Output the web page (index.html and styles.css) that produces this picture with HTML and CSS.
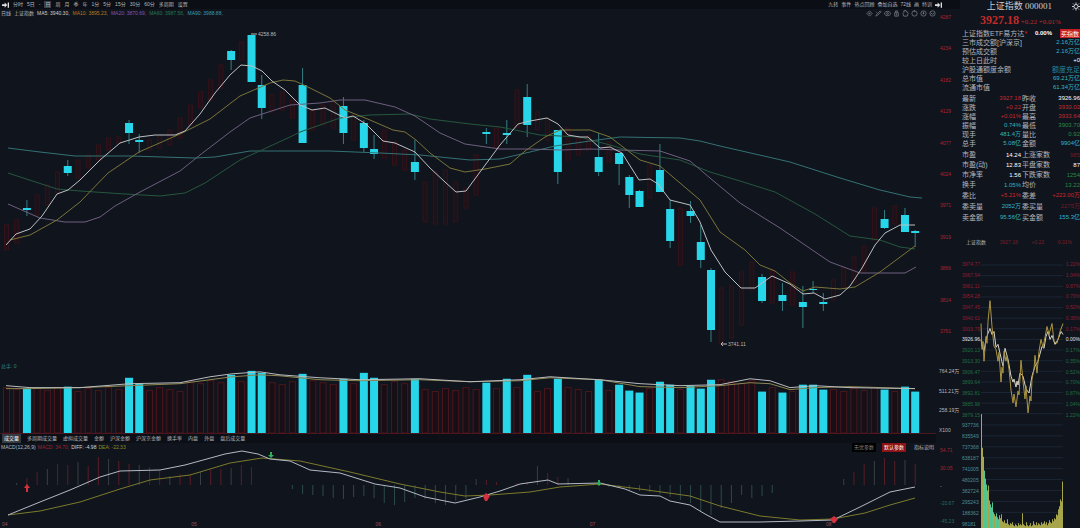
FILE: index.html
```html
<!DOCTYPE html>
<html lang="zh-CN">
<head>
    <meta charset="UTF-8">
    <meta name="viewport" content="width=device-width, initial-scale=1.0">
    <title>上证指数 000001</title>
    <link rel="stylesheet" href="styles.css">
</head>
<body>
    <div class="app">
        <main class="main">
            <nav class="toolbar">
                <svg class="arrow-icon" viewBox="0 0 8 6"><path d="M0 2h3V0l3 3-3 3V4H0zM6.500 0H8v6H6.500z"/></svg>
                <button>分时</button>
                <button>5日</button>
                <span>-</span>
                <button class="active">日</button>
                <button>周</button>
                <button>月</button>
                <button>季</button>
                <button>年</button>
                <button>1分</button>
                <button>5分</button>
                <button>15分</button>
                <button>30分</button>
                <button>60分</button>
                <button>多周期</button>
                <button>设置</button>
                <div class="tools">
                    <button>九转</button>
                    <button>事件</button>
                    <button>热点回顾</button>
                    <button>叠加自选</button>
                    <button>72线</button>
                    <button>画</button>
                    <button>特训</button>
                    <svg class="arrow-icon" viewBox="0 0 8 6"><path d="M0 2h3V0l3 3-3 3V4H0zM6.500 0H8v6H6.500z"/></svg>
                </div>
            </nav>

            <div class="info">
                <span>日线</span>
                <span>上证指数</span>
                <span class="ma5">MA5: 3940.30,</span>
                <span class="ma10">MA10: 3895.23,</span>
                <span class="ma20">MA20: 3870.69,</span>
                <span class="ma60">MA60: 3987.56,</span>
                <span class="ma90">MA90: 3988.88,</span>
                <div class="icons">
                    <svg viewBox="0 0 8 8"><path d="M4 1l3 3-3 3-3-3zM4 3v2M3 4h2"/></svg>
                    <svg viewBox="0 0 8 8"><path d="M1 7l1-2 4-4 1 1-4 4zM1 2l1 1"/></svg>
                    <svg viewBox="0 0 8 8"><path d="M0 4q4-5 8 0q-4 5-8 0z"/><circle cx="4" cy="4" r="1"/></svg>
                    <svg viewBox="0 0 8 8"><path d="M2 3h4v4H2zM3 3V1h2v2M4 4v2"/></svg>
                    <svg viewBox="0 0 8 8"><path d="M2 7L1 4l1-1V1h1V0h1v1h1v1h1l1 2-1 3z"/></svg>
                    <svg viewBox="0 0 8 8"><circle cx="4" cy="4" r="3"/><path d="M4 0v2"/></svg>
                    <svg viewBox="0 0 8 8"><circle cx="4" cy="4" r="3"/><path d="M4 2v3M3 4h2"/></svg>
                    <svg viewBox="0 0 8 8"><circle cx="4" cy="4" r="3"/><path d="M2 3l2 2 2-2"/></svg>
                </div>
            </div>

            <svg class="chart k-chart" id="k-chart" viewBox="0 18 936 344" preserveAspectRatio="none">
                <g id="k-up"></g>
                <g id="k-down"></g>
                <polyline class="line ma90" points="8,148 40,152 75,156 130,156 195,158 215,157 250,151 330,151 380,153 420,155 470,160 500,159 530,152 555,146 590,141 620,137 680,138 700,141 720,146 790,162 840,178 880,190 910,197 922,198"/>
                <polyline class="line ma60" points="8,173 57,189 80,191 125,194 160,196 185,193 205,183 240,160 290,137 300,132 340,118 370,115 410,114 430,119 470,124 500,127 540,135 580,137 610,145 640,154 680,160 710,172 740,181 775,192 815,214 850,236 880,240 900,247 915,249"/>
                <polyline class="line ma20" points="8,204 40,218 65,222 85,222 100,217 115,206 140,192 180,171 200,155 230,132 250,118 290,105 320,103 340,100 365,100 395,107 415,116 440,133 465,144 500,149 530,149 560,150 590,149 620,150 660,151 690,161 710,178 740,203 780,228 830,262 860,273 905,273 916,267"/>
                <polyline class="line ma10" points="10,240 30,235 57,220 80,202 108,173 139,152 180,134 210,119 240,96 270,83 283,80 295,81 310,88 330,98 345,110 370,120 393,130 405,132 416,140 430,153 450,168 465,172 485,169 510,164 525,151 545,137 560,130 590,130 610,137 640,160 660,166 680,183 700,200 720,232 745,250 760,265 775,271 790,283 803,291 815,287 840,289 855,287 880,272 915,246"/>
                <polyline class="line ma5" points="6,245 16,234 30,229 42,216 57,194 68,190 80,180 100,160 120,143 139,137 155,135 175,135 185,131 200,114 215,93 230,75 241,65 252,66 262,71 272,81 285,90 300,105 312,110 325,108 345,118 353,116 366,124 383,141 395,143 415,152 430,168 445,182 456,192 466,191 480,172 500,145 518,124 530,121 547,118 558,124 568,135 580,137 588,137 600,148 610,147 622,153 639,180 650,179 658,184 670,200 690,205 700,222 711,250 725,272 741,288 755,288 772,276 790,284 803,294 814,293 825,299 840,295 850,286 862,268 875,245 885,233 900,225 915,225"/>
                <path class="pointer" d="M252 34h5M721 344h6M723 342l-2 2 2 2"/>
                <text class="mark" x="258" y="36">4258.86</text>
                <text class="mark" x="728" y="346">3741.11</text>
            </svg>
            <div class="axis k-axis">
                <span>4287</span><span>4234</span><span>4182</span><span>4129</span><span>4077</span><span>4024</span><span>3971</span><span>3919</span><span>3866</span><span>3814</span><span>3761</span>
            </div>

            <div class="vol-panel">
                <span class="vol-name">总手: 0</span>
                <svg class="chart" viewBox="0 362 936 72" preserveAspectRatio="none">
                    <g id="v-up"></g>
                    <g id="v-down"></g>
                    <polyline class="line v-slow" points="6,389 30,389 80,388 130,386 180,384 210,380 232,377 260,375 280,376 320,380 360,381 420,380 470,382 520,381 550,378 600,380 640,387 680,388 720,386 750,383 770,384 790,390 815,388 850,387 915,389"/>
                    <polyline class="line v-fast" points="6,386 30,388 80,388 130,384 180,383 210,377 232,374 260,372 280,375 320,378 360,380 420,379 470,382 520,380 550,377 600,380 640,384 680,386 720,385 750,379 770,381 790,388 815,386 850,388 915,389"/>
                </svg>
            </div>
            <div class="axis v-axis">
                <span>764.24万</span><span>511.21万</span><span>258.19万</span><span>X100</span>
            </div>

            <nav class="tabs">
                <button class="active">成交量</button>
                <button>多周期成交量</button>
                <button>虚拟成交量</button>
                <button>金额</button>
                <button>沪深金额</button>
                <button>沪深京金额</button>
                <button>换手率</button>
                <button>内盘</button>
                <button>外盘</button>
                <button>盘后成交量</button>
            </nav>

            <div class="macd-head">
                <span>MACD(12,26,9)</span>
                <span class="macd">MACD: 34.70,</span>
                <span class="diff">DIFF: -4.98</span>
                <span class="dea">DEA: -22.33</span>
                <div class="params">
                    <button class="none">无优参数</button>
                    <button class="default">默认参数</button>
                    <button>指标说明</button>
                </div>
            </div>

            <svg class="chart macd-chart" viewBox="0 452 936 68" preserveAspectRatio="none">
                <g id="m-bars"></g>
                <polyline class="line dea-line" points="8,515 40,511 80,502 120,489 150,480 190,475 230,463 262,458 300,461 350,472 400,484 440,492 465,496 490,495 530,492 560,487 600,484 640,489 690,496 720,506 760,516 800,520 833,519 865,513 890,505 915,498"/>
                <polyline class="line diff-line" points="8,515 40,502 70,490 100,477 120,471 160,470 185,465 225,454 242,451 258,454 270,459 290,461 310,470 340,473 375,484 400,488 425,497 455,503 480,497 500,491 520,484 548,480 558,484 600,483 625,489 640,495 660,496 670,501 690,505 705,514 720,522 760,522 800,521 833,520 860,507 890,492 915,487"/>
                <path class="buy" d="M27 484l3 4h-2v4h-2v-4h-2zM486 493l4 3-3 5h-2l-2-5zM834 516l4 3-3 4h-2l-3-4z"/>
                <path class="sell" d="M271 458l3-3h-2v-3h-2v3h-2zM599 486l3-3h-2v-3h-2v3h-2z"/>
            </svg>
            <div class="axis m-axis">
                <span>54.71</span><span>30.05</span><span class="zero">-</span><span class="neg">-20.67</span><span class="neg">-45.23</span>
            </div>

            <div class="dates">
                <span>04</span><span>05</span><span>06</span><span>07</span><span>08</span>
            </div>
        </main>

        <aside class="side">
            <header class="title">
                <h1>上证指数 000001</h1>
                <svg class="gear" viewBox="0 0 8 8"><circle cx="4" cy="4" r="2"/><path d="M4 0v2M4 6v2M0 4h2M6 4h2M1 1l1 1M6 6l1 1M7 1L6 2M1 7l1-1"/></svg>
            </header>
            <p class="price"><strong>3927.18</strong> <span>+0.22</span> <span>+0.01%</span></p>

            <div class="etf">
                <span>上证指数ETF易方达<i>*</i></span>
                <b>0.00%</b>
                <button>买指数</button>
            </div>
            <table class="stats">
                <tr><th>三市成交额[沪深京]</th><td>2.16万亿</td></tr>
                <tr><th>预估成交额</th><td>2.16万亿</td></tr>
                <tr><th>较上日此时</th><td class="flat">+0</td></tr>
                <tr><th>沪股通额度余额</th><td class="quota">额度充足</td></tr>
                <tr><th>总市值</th><td>69.21万亿</td></tr>
                <tr><th>流通市值</th><td>61.34万亿</td></tr>
            </table>

            <table class="quote">
                <tr><th>最新</th><td class="up">3927.18</td><th>昨收</th><td class="flat">3926.96</td></tr>
                <tr><th>涨跌</th><td class="up">+0.22</td><th>开盘</th><td class="up">3930.02</td></tr>
                <tr><th>涨幅</th><td class="up">+0.01%</td><th>最高</th><td class="up">3933.64</td></tr>
                <tr><th>振幅</th><td>0.74%</td><th>最低</th><td class="down">3903.70</td></tr>
                <tr><th>现手</th><td>481.4万</td><th>量比</th><td class="down">0.92</td></tr>
                <tr><th>总手</th><td>5.08亿</td><th>金额</th><td>9904亿</td></tr>
            </table>
            <table class="quote mid">
                <tr><th>市盈</th><td class="flat">14.24</td><th>上涨家数</th><td class="up dim">985</td></tr>
                <tr><th>市盈(动)</th><td class="flat">12.83</td><th>平盘家数</th><td class="flat">87</td></tr>
                <tr><th>市净率</th><td class="flat">1.56</td><th>下跌家数</th><td class="down">1254</td></tr>
                <tr><th>换手</th><td>1.05%</td><th>均价</th><td class="down">13.22</td></tr>
            </table>
            <table class="quote tall">
                <tr><th>委比</th><td class="up">+5.21%</td><th>委差</th><td class="up">+223.00万</td></tr>
                <tr><th>委卖量</th><td>2052万</td><th>委买量</th><td class="up dim">2275万</td></tr>
                <tr><th>卖金额</th><td>95.56亿</td><th>买金额</th><td>155.3亿</td></tr>
            </table>

            <div class="mini-head">
                <span>上证指数</span>
                <span class="r">3927.18</span>
                <span class="r">+0.22</span>
                <span class="r">0.01%</span>
            </div>
            <div class="mini mini-price">
                <div class="scale" id="price-scale"></div>
                <svg class="chart" viewBox="981 258 82 160" preserveAspectRatio="none">
                    <g class="grid-lines" id="price-grid"></g>
                    <polyline class="line avg" points="981,338 982,345 984,350 986,338 988,332 990,327 992,333 994,330 996,346 998,343 1000,352 1003,365 1005,347 1008,358 1011,375 1013,381 1014,378 1016,386 1017,380 1018,384 1020,372 1023,375 1026,388 1029,392 1032,375 1035,365 1038,360 1042,345 1044,347 1046,335 1048,330 1050,338 1052,334 1055,343 1058,338 1061,330 1063,333"/>
                    <polyline class="line now" points="981,322 982,348 983,340 984,360 986,335 987,342 988,320 990,299 992,325 994,345 996,348 998,360 999,351 1001,381 1002,366 1003,372 1004,350 1006,360 1007,355 1009,368 1011,389 1013,402 1014,393 1016,406 1018,390 1019,394 1021,359 1023,380 1025,398 1026,385 1028,412 1030,395 1031,400 1032,378 1034,368 1035,354 1037,372 1039,350 1041,338 1043,346 1045,336 1047,325 1049,333 1052,322 1054,340 1057,342 1060,330 1063,322"/>
                </svg>
                <div class="scale pct" id="pct-scale"></div>
            </div>
            <div class="mini mini-vol">
                <div class="scale" id="vol-scale"></div>
                <svg class="chart" viewBox="981 420 82 108" preserveAspectRatio="none">
                    <g class="grid-lines" id="vol-grid"></g>
                    <g id="mini-bars"></g>
                </svg>
            </div>
        </aside>
    </div>
    <script src="script.js"></script>
</body>
</html>
```
FILE: styles.css
```css
* {
    box-sizing: border-box;
}

body {
    margin: 0;
    background-color: #10141d;
    color: #b4b8be;
    font-family: "Liberation Sans", "Noto Sans CJK SC", sans-serif;
    font-size: 5px;
    line-height: 9px;
    overflow: hidden;
}

button {
    padding: 0;
    border: none;
    background: none;
    color: inherit;
    font: inherit;
    white-space: nowrap;
    cursor: pointer;
}

.app {
    display: grid;
    grid-template-columns: minmax(0, 1fr) 120px;
    grid-template-rows: minmax(0, 1fr);
    height: 100vh;
}

.main {
    display: grid;
    grid-template-columns: minmax(0, 1fr) 24px;
    grid-template-rows: 9px 9px minmax(0, 344fr) minmax(0, 72fr) 9px 9px minmax(0, 68fr) 8px;
    min-height: 0;
}

/* Barra superior */
.toolbar {
    grid-column: 1 / 3;
    display: flex;
    align-items: center;
    gap: 4px;
    padding: 0 18px 0 2px;
    background-color: #0b0e14;
}

.toolbar .active {
    padding: 0 1px;
    background-color: #3a3f47;
    line-height: 7px;
}

.arrow-icon {
    width: 7px;
    height: 6px;
    fill: #e0e0e0;
}

.tools {
    display: flex;
    align-items: center;
    gap: 3px;
    margin-left: auto;
}

.info {
    grid-column: 1;
    display: flex;
    gap: 3px;
    padding-left: 1px;
    white-space: nowrap;
}

.icons {
    display: flex;
    align-items: center;
    gap: 2px;
    margin-left: auto;
}

.icons svg {
    width: 7px;
    height: 7px;
    fill: none;
    stroke: #6f747b;
}

.ma5 { color: #d0d0d0; stroke: #bcc0c3; }
.ma10 { color: #b47c1e; stroke: #79743a; }
.ma20 { color: #8656b4; stroke: #6c5f7d; }
.ma60 { color: #277a50; stroke: #26573f; }
.ma90 { color: #3d9eb2; stroke: #337273; }

.chart {
    display: block;
    width: 100%;
    height: 100%;
    min-width: 0;
    min-height: 0;
    overflow: visible;
}

.line {
    fill: none;
    stroke-width: 1;
    vector-effect: non-scaling-stroke;
}

.k-chart {
    grid-column: 1;
    grid-row: 3;
}

.candle {
    fill: #28d6ea;
}

.wick {
    stroke: #357f84;
}

.rise {
    fill: #1c1219;
    stroke: #35121a;
}

.pointer {
    fill: none;
    stroke: #b5b5b5;
}

.mark {
    fill: #b5b9bd;
    font-size: 5px;
}

.axis {
    grid-column: 2;
    display: flex;
    flex-direction: column;
    justify-content: space-between;
    line-height: 8px;
    white-space: nowrap;
}

.k-axis {
    grid-row: 2 / 4;
    padding: 4px 0 27px 4px;
    color: #a82431;
}

.v-axis {
    grid-row: 4;
    padding: 5px 0 0 3px;
    color: #b4b8be;
}

.m-axis {
    grid-row: 6 / 9;
    padding: 3px 0 3px 4px;
    color: #a32531;
}

.m-axis .zero { color: #a9adb3; }
.m-axis .neg { color: #2a6e5c; }

/* Volume */
.vol-panel {
    grid-column: 1;
    grid-row: 4;
    position: relative;
    min-height: 0;
    border-bottom: 1px solid #4d1720;
}

.vol-name {
    position: absolute;
    top: 0;
    left: 1px;
    color: #2f8686;
}

.v-rise {
    fill: #170f15;
    stroke: #4e161c;
}

.v-fast { stroke: #b9bcbd; }
.v-slow { stroke: #8d8550; }

.tabs {
    grid-column: 1;
    grid-row: 5;
    display: flex;
    gap: 6px;
    padding-left: 2px;
    background-color: #0c1016;
}

.tabs .active {
    padding: 0 2px;
    background-color: #353a40;
    color: #ffffff;
}

.macd-head {
    grid-column: 1;
    grid-row: 6;
    display: flex;
    gap: 2px;
    padding-left: 1px;
    white-space: nowrap;
}

.macd-head .macd { color: #9c2431; }
.macd-head .diff { color: #d8d8d8; }
.macd-head .dea { color: #8f8d1f; }

.params {
    display: flex;
    gap: 6px;
    margin-left: auto;
}

.params button {
    padding: 0 2px;
}

.params .none {
    background-color: #000000;
    color: #7b7f85;
}

.params .default {
    background-color: #8c1216;
    color: #ffffff;
}

.macd-chart {
    grid-column: 1;
    grid-row: 7;
}

.m-red { stroke: #5a1d27; }
.m-dark { stroke: #3a3f45; }
.m-green { stroke: #2d4a49; }
.diff-line { stroke: #b3b9c4; }
.dea-line { stroke: #7c7a2c; }
.buy { fill: #d2313d; }
.sell { fill: #2fae5a; }

.dates {
    grid-column: 1;
    grid-row: 8;
    display: grid;
    grid-template-columns: 189fr 184fr 214fr 236fr 110fr;
    padding-left: 2px;
    color: #96505a;
    line-height: 8px;
}

/* Painel lateral */
.side {
    display: flex;
    flex-direction: column;
    min-height: 0;
    overflow: hidden;
    padding-left: 2px;
    font-size: 6px;
    white-space: nowrap;
}

.title {
    display: flex;
    justify-content: flex-end;
    gap: 20px;
    line-height: 13px;
}

.title h1 {
    margin: 0;
    color: #c9ccd0;
    font-family: "Liberation Serif", "Noto Sans CJK SC", serif;
    font-size: 9px;
    font-weight: normal;
}

.gear {
    width: 8px;
    height: 13px;
    fill: none;
    stroke: #c9ccd0;
}

.price {
    margin: 0;
    padding-left: 18px;
    color: #c32a28;
    font-family: "Liberation Serif", serif;
    font-size: 7px;
    line-height: 14px;
}

.price strong {
    font-size: 12px;
}

.etf {
    display: flex;
    justify-content: space-between;
    font-size: 7px;
}

.etf i { color: #e02020; }

.etf b {
    color: #ffffff;
    font-size: 6px;
}

.etf button {
    width: 20px;
    background-color: #c41d22;
    color: #ffffff;
    font-size: 6px;
    line-height: 8px;
}

table {
    width: 100%;
    border-collapse: collapse;
}

th, td {
    padding: 0;
}

th {
    font-size: 7px;
    font-weight: normal;
    text-align: left;
}

td {
    color: #32b4c4;
    text-align: right;
}

.stats .quota {
    color: #2285a6;
    font-size: 7px;
}

.quote {
    margin-top: 2px;
    table-layout: fixed;
}

.quote th {
    width: 25px;
}

.quote th:nth-child(3) {
    padding-left: 1px;
}

.mid { line-height: 10px; }

.tall {
    margin-top: 0;
    line-height: 11px;
}

.stats .flat,
.quote .flat { color: #ffffff; }
.quote .up { color: #c32a30; }
.quote .down { color: #2a8a45; }
.quote .dim { color: #701c26; }

.mini-head {
    display: flex;
    justify-content: space-between;
    padding: 0 8px 0 4px;
    margin-top: 15px;
    font-size: 5px;
}

.mini-head .r { color: #7a1f29; }

.mini {
    display: grid;
    grid-template-columns: 19px minmax(0, 1fr) 17px;
    grid-template-rows: minmax(0, 1fr);
    font-size: 5px;
    line-height: 8px;
}

.mini-price {
    flex: 160 1 0;
    min-height: 0;
    margin-top: 13px;
}

.mini-vol {
    flex: 108 1 0;
    min-height: 0;
    margin-top: 2px;
    color: #4c8e93;
}

.scale {
    display: flex;
    flex-direction: column;
    justify-content: space-between;
}

.pct { text-align: right; }

.scale .high { color: #8a1e34; }
.scale .low { color: #1f6e41; }
.scale .mid-price { color: #e4e4e4; }

.grid-lines { stroke: #1b2635; }
.avg { stroke: #d9d5c5; }
.now { stroke: #ac9540; }
.bar-cyan { stroke: #54c795; }
.bar-yellow { stroke: #a8a64b; }
```
FILE: script.js
```javascript
const NS = "http://www.w3.org/2000/svg";
const STEP = 10.21;
const center = i => 6.5 + i * STEP;

function draw(id, tag, cls, attrs) {
    const el = document.createElementNS(NS, tag);
    el.setAttribute("class", cls);
    for (const key in attrs) el.setAttribute(key, attrs[key]);
    document.getElementById(id).appendChild(el);
}

function vline(id, cls, x, y1, y2) {
    draw(id, "line", cls, { x1: x, x2: x, y1: y1, y2: y2 });
}

// index, high, open, close, low, volume top
const falls = [
    [2, 200, 208, 210, 216, 389], [6, 160, 166, 173, 176, 387], [12, 120, 123, 133, 144, 378],
    [13, 134, 140, 142, 153, 384], [22, 50, 51, 60, 70, 375], [24, 33, 35, 82, 82, 371],
    [25, 75, 85, 108, 119, 373], [29, 68, 85, 143, 143, 374], [33, 97, 106, 133, 144, 379],
    [35, 120, 123, 148, 152, 373], [36, 135, 149, 154, 159, 378], [40, 140, 162, 172, 180, 379],
    [47, 128, 132, 134, 144, 383], [49, 120, 133, 135, 144, 379], [51, 84, 97, 125, 137, 375],
    [54, 130, 130, 172, 184, 379], [58, 133, 157, 172, 176, 380], [60, 153, 153, 164, 185, 385],
    [61, 175, 177, 195, 208, 391], [62, 190, 191, 207, 207, 393], [64, 144, 170, 192, 192, 382],
    [65, 200, 209, 241, 248, 385], [67, 201, 211, 216, 223, 386], [68, 225, 242, 260, 268, 389],
    [69, 268, 270, 330, 342, 380], [74, 274, 277, 301, 303, 392], [76, 283, 295, 301, 311, 393],
    [78, 286, 302, 307, 328, 385], [79, 281, 289, 290, 293, 385], [80, 293, 302, 304, 311, 390],
    [86, 210, 219, 228, 229, 390], [88, 208, 215, 232, 232, 387], [89, 230, 231, 233, 247, 392]
];

// index, high, low
const rises = [
    [0, 225, 250], [1, 220, 243], [3, 195, 215], [4, 185, 205], [5, 172, 193], [7, 160, 178],
    [8, 155, 168], [9, 145, 160], [10, 138, 150], [11, 137, 143], [14, 140, 150], [15, 136, 148],
    [16, 130, 145], [17, 118, 138], [18, 105, 125], [19, 92, 108], [20, 80, 100], [21, 65, 88],
    [23, 42, 60], [26, 95, 112], [27, 92, 110], [28, 100, 118], [30, 110, 130], [31, 105, 125],
    [32, 102, 128], [34, 115, 140], [37, 130, 158], [38, 142, 165], [39, 150, 170], [41, 182, 222],
    [42, 172, 224], [43, 170, 224], [44, 182, 222], [45, 188, 208], [46, 155, 195], [48, 128, 148],
    [50, 90, 128], [52, 112, 130], [53, 118, 140], [55, 128, 160], [56, 138, 155], [57, 136, 150],
    [59, 142, 162], [63, 165, 198], [66, 208, 265], [70, 288, 344], [71, 286, 338], [72, 272, 325],
    [73, 262, 290], [75, 270, 303], [77, 272, 305], [81, 280, 300], [82, 267, 288], [83, 257, 283],
    [84, 246, 272], [85, 208, 240], [87, 206, 224]
];

falls.forEach(([i, high, open, close, low, vol]) => {
    const x = center(i);
    vline("k-down", "wick", x, high, low);
    draw("k-down", "rect", "candle", { x: x - 4, y: open, width: 8, height: close - open });
    draw("v-down", "rect", "candle", { x: x - 4, y: vol, width: 8, height: 434 - vol });
});

rises.forEach(([i, high, low]) => {
    const x = center(i);
    const top = (i > 17 && i < 40 ? 381 : 388) + (i * 7) % 5 - (i > 69 && i < 74 ? 8 : 0);
    draw("k-up", "rect", "rise", { x: x - 2, y: high, width: 4, height: low - high });
    draw("v-up", "rect", "v-rise", { x: x - 3, y: top, width: 6, height: 434 - top });
});

// MACD bars: where each one ends, measured from the zero line at 485
const macd = [
    0, -2, -7, -13, -16, -21, -20, -23, -19, -28, -26, -24, -21, -20, -18, -14, -9, -11, -10, -13,
    -15, -16, -17, -20, -18, 0, 0, 0, 4, 9, 10, 11, 13, 14, 12, 11, 13, 18, 20, 17,
    13, 14, 18, 20, 16, 14, -6, -5, -3, 0, -2, -3, -19, -12, -8, -7, 0, 0, 0, 2,
    3, 5, 6, 7, 9, 12, 15, 18, 27, 30, 23, 18, 10, 13, 11, 8, 0, 0, 0, 0,
    0, 0, -6, -13, -21, -24, -27, -24, -25, -21
];
macd.forEach((v, i) => {
    if (!v) return;
    const cls = v > 0 ? "m-green" : i % 3 == 1 ? "m-dark" : "m-red";
    vline("m-bars", cls, center(i), 485, 485 + v);
});

// Intraday scales
function fill(id, values, mid) {
    values.forEach((value, i) => {
        const span = document.createElement("span");
        span.textContent = value;
        if (mid) span.className = i < mid ? "high" : i > mid ? "low" : "mid-price";
        document.getElementById(id).appendChild(span);
    });
}

const prices = [];
const percents = [];
for (let i = 7; i >= -7; i--) {
    prices.push((3926.96 + i * 6.83).toFixed(2));
    percents.push((Math.abs(i) * 0.174).toFixed(2) + "%");
    draw("price-grid", "line", "", { x1: 981, x2: 1063, y1: 338 - i * 10.7, y2: 338 - i * 10.7 });
}
fill("price-scale", prices, 7);
fill("pct-scale", percents, 7);
fill("vol-scale", [937736, 835549, 737368, 638187, 741005, 480205, 382724, 295243, 188362, 98181]);
for (let i = 0; i < 10; i++) {
    draw("vol-grid", "line", "", { x1: 981, x2: 1063, y1: 424 + i * 11, y2: 424 + i * 11 });
}

const bars = [
    115, 81, 72, 58, 50, 44, 38, 43, 28, 24, 21, 26, 16, 14, 12, 15, 11, 9, 13, 10, 14, 7, 6, 8, 5,
    5, 9, 4, 3, 5, 4, 6, 3, 2, 4, 3, 2, 5, 3, 4, 3, 15, 4, 3, 2, 6, 3, 2, 3, 5, 2, 3, 7, 4, 3, 6,
    3, 5, 4, 3, 6, 4, 5, 7, 4, 6, 3, 5, 8, 6, 5, 9, 7, 10, 9, 14, 13, 19, 22, 29, 27, 47
];
bars.forEach((h, i) => {
    vline("mini-bars", i < 20 && i % 3 != 1 ? "bar-cyan" : "bar-yellow", 981.5 + i, 528 - h, 528);
});
```
